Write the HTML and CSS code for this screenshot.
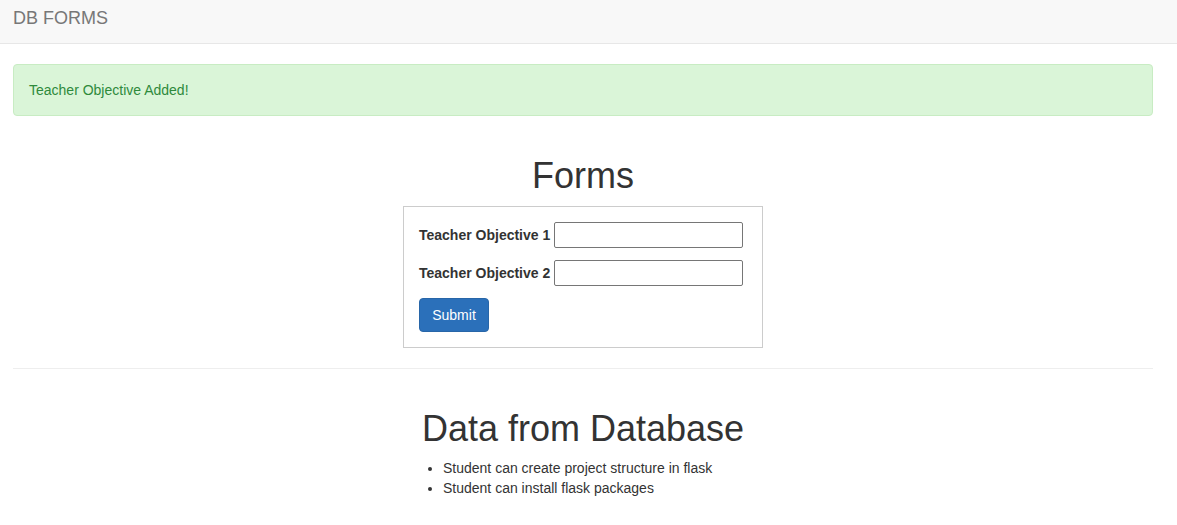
FILE: index.html
```html
<!DOCTYPE html>
<html>
<head>
<meta charset="utf-8">
<link rel="stylesheet" href="styles.css">
</head>
<body>
<nav class="navbar"><span class="brand">DB FORMS</span></nav>
<main class="page">
  <div class="alert">Teacher Objective Added!</div>
  <div class="column">
    <h1 class="title">Forms</h1>
    <form class="form-box">
      <div class="row"><label>Teacher Objective 1</label><input type="text"></div>
      <div class="row"><label>Teacher Objective 2</label><input type="text"></div>
      <button type="button" class="btn">Submit</button>
    </form>
  </div>
  <hr class="rule">
  <div class="column">
    <h1 class="title second">Data from Database</h1>
    <ul class="list">
      <li>Student can create project structure in flask</li>
      <li>Student can install flask packages</li>
    </ul>
  </div>
</main>
</body>
</html>
```

FILE: styles.css
```css
* { box-sizing: border-box; }
html, body { margin: 0; padding: 0; }
body {
  font-family: "Liberation Sans", Arial, sans-serif;
  font-size: 14px;
  line-height: 20px;
  color: #333;
  background: #fff;
}
.navbar {
  height: 44px;
  background: #f8f8f8;
  border-bottom: 1px solid #e7e7e7;
  padding: 8px 13px 0;
}
.brand {
  font-size: 18px;
  line-height: 20px;
  color: #777;
}
.page {
  width: 1140px;
  margin-left: 13px;
  padding-top: 20px;
}
.alert {
  height: 52px;
  padding: 15px;
  background: #daf5d8;
  border: 1px solid #c8ecc3;
  border-radius: 4px;
  color: #2e8a3c;
}
.column {
  width: 360px;
  margin: 0 auto;
}
.title {
  margin: 40px 0 10px;
  font-size: 36px;
  line-height: 39.6px;
  font-weight: 500;
  text-align: center;
  white-space: nowrap;
}
.title.second { margin-top: 40px; }
.form-box {
  border: 1px solid #ccc;
  padding: 15px;
  margin: 0;
}
.row {
  display: flex;
  align-items: center;
  margin-bottom: 12px;
  height: 26px;
}
.row label {
  font-weight: bold;
  margin-right: 4px;
  white-space: nowrap;
}
.row input {
  width: 189px;
  height: 26px;
  border: 1px solid #767676;
  border-radius: 2px;
  font: inherit;
  padding: 1px 2px;
}
.btn {
  display: block;
  width: 70px;
  height: 34px;
  padding: 0;
  background: #2b70ba;
  border: 1px solid #2866a8;
  border-radius: 4px;
  color: #fff;
  font-family: "Liberation Sans", Arial, sans-serif;
  font-size: 14px;
  line-height: 20px;
}
.rule {
  margin: 20px 0 0;
  border: 0;
  border-top: 1px solid #eee;
  height: 0;
}
.list {
  margin: 0;
  padding-left: 40px;
}
.list li { line-height: 20px; }
```
